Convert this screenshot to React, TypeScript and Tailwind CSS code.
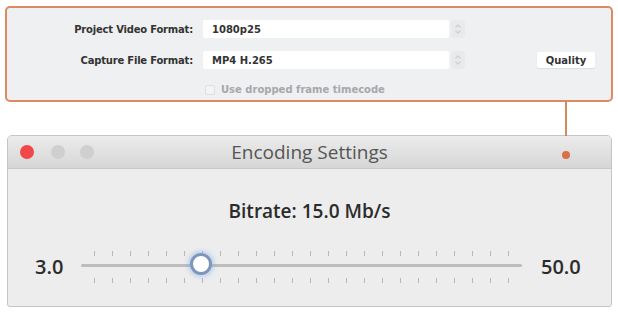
import React from 'react'

const ticks = Array.from({ length: 24 }, (_, i) => i)

function Stepper() {
  return (
    <div className="ml-[2px] flex h-[18px] w-[14px] items-center justify-center rounded-[3px] bg-[#e9eaeb]">
      <svg width="8" height="12" viewBox="0 0 8 12" fill="none" stroke="#cfd0d2" strokeWidth="1.3">
        <path d="M1.5 4.5 L4 2 L6.5 4.5" />
        <path d="M1.5 7.5 L4 10 L6.5 7.5" />
      </svg>
    </div>
  )
}

function TickRow() {
  return (
    <div className="flex h-[5px] justify-between px-[13px]">
      {ticks.map((t) => (
        <div key={t} className="h-[5px] w-px bg-[#b8b8b8]" />
      ))}
    </div>
  )
}

export default function App() {
  return (
    <div className="relative h-[312px] w-[618px] overflow-hidden bg-white font-['DejaVu_Sans',sans-serif]">
      {/* Capture settings panel */}
      <div className="mx-[5px] mt-[6px] h-[96px] rounded-[5px] border-2 border-[#dc8b60] bg-[#eef0f2] pt-[12px]">
        <div className="flex items-center">
          <div className="w-[186px] text-right text-[10px] font-semibold tracking-[-0.2px] text-[#333]">Project Video Format:</div>
          <div className="ml-[10px] flex h-[18px] w-[246px] items-center rounded-[2px] bg-white pl-[9px] text-[10px] font-semibold text-[#333]">
            1080p25
          </div>
          <Stepper />
        </div>
        <div className="mt-[13px] flex items-center">
          <div className="w-[186px] text-right text-[10px] font-semibold tracking-[-0.2px] text-[#333]">Capture File Format:</div>
          <div className="ml-[10px] flex h-[18px] w-[246px] items-center rounded-[2px] bg-white pl-[9px] text-[10px] font-semibold text-[#333]">
            MP4 H.265
          </div>
          <Stepper />
          <div className="ml-[72px] flex h-[16px] w-[58px] items-center justify-center rounded-[2px] bg-white text-[10px] font-bold text-[#333] shadow-[0_1px_1px_rgba(0,0,0,0.08)]">
            Quality
          </div>
        </div>
        <div className="mt-[13px] flex items-center pl-[198px]">
          <div className="h-[10px] w-[10px] rounded-[2px] border border-[#dedfe0] bg-[#f3f4f5]" />
          <div className="ml-[6px] text-[10px] font-semibold text-[#a6a8ab]">Use dropped frame timecode</div>
        </div>
      </div>

      {/* Connector */}
      <div className="absolute left-[565px] top-[101px] h-[52px] w-[2px] bg-[#cf8a62]" />

      {/* Encoding Settings window */}
      <div className="mx-[7px] mt-[33px] h-[172px] w-[605px] overflow-hidden rounded-t-[5px] rounded-b-[3px] border border-[#c4c4c4] bg-[#ededed]">
        <div className="relative flex h-[33px] items-center border-b border-[#c9c9c9] bg-gradient-to-b from-[#ececec] to-[#d6d6d6]">
          <div className="ml-[12px] h-[14px] w-[14px] rounded-full bg-[#f04848]" />
          <div className="ml-[17px] h-[14px] w-[14px] rounded-full bg-[#cfcfcf]" />
          <div className="ml-[15px] h-[14px] w-[14px] rounded-full bg-[#cfcfcf]" />
          <div className="absolute inset-x-0 top-[4px] text-center font-['Open_Sans',sans-serif] text-[19px] leading-[24px] text-[#555]">Encoding Settings</div>
          <div className="absolute left-[554px] top-[15px] h-[8px] w-[8px] rounded-full bg-[#d9704a]" />
        </div>

        <div className="mt-[30px] text-center font-['Open_Sans',sans-serif] text-[19px] font-semibold leading-[24px] text-[#2b2b2b]">
          Bitrate: 15.0 Mb/s
        </div>

        <div className="mt-[28px] flex items-center">
          <div className="ml-[27px] w-[40px] font-['Open_Sans',sans-serif] text-[20px] font-semibold text-[#2b2b2b]">3.0</div>
          <div className="relative ml-[6px] w-[441px]">
            <TickRow />
            <div className="mt-[8px] mb-[11px] h-[3px] rounded-full bg-[#bdbdbd]" />
            <TickRow />
            <div className="absolute left-[109px] top-[2px] h-[22px] w-[22px] rounded-full border-[3px] border-[#7d97b8] bg-white shadow-[0_0_4px_2px_rgba(120,170,240,0.45)]" />
          </div>
          <div className="ml-[19px] font-['Open_Sans',sans-serif] text-[20px] font-semibold text-[#2b2b2b]">50.0</div>
        </div>
      </div>
    </div>
  )
}
